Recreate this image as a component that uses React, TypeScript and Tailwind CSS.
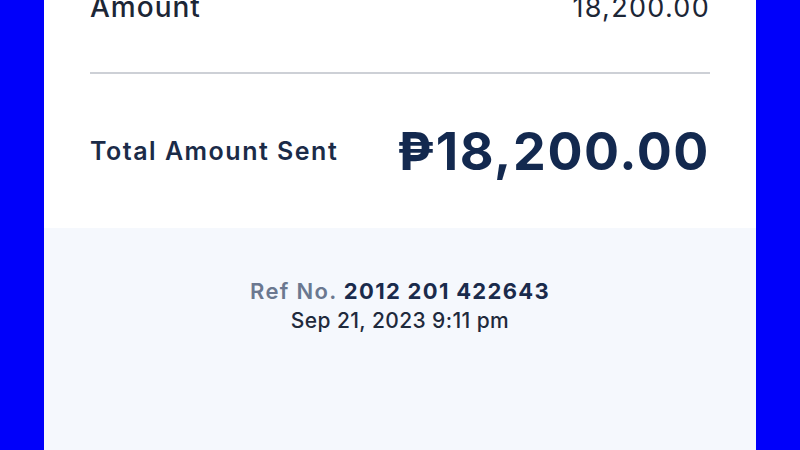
export default function App() {
  return (
    <div
      className="w-[800px] h-[450px] overflow-hidden flex bg-[#0000fa] px-[44px]"
      style={{ fontFamily: 'Inter, "DejaVu Sans", sans-serif' }}
    >
      <div className="flex-1 flex flex-col bg-white">
        {/* Summary */}
        <div className="px-[46px] h-[228px] flex flex-col">
          <div className="flex items-baseline justify-between -mt-[8px] h-[30px]">
            <span className="text-[28px] leading-[30px] font-medium tracking-[1px] text-[#1c2636]">Amount</span>
            <span className="text-[27px] leading-[30px] font-normal tracking-[1.3px] text-[#1c2636]">18,200.00</span>
          </div>
          <div className="mt-[50px] border-t-2 border-[#cdd0d6]" />
          <div className="flex items-center justify-between mt-[52px]">
            <span className="text-[25px] font-semibold tracking-[1.5px] text-[#1b2b48]">
              Total Amount Sent
            </span>
            <span className="text-[52px] leading-none font-bold tracking-[1.6px] text-[#13294f]">
              ₱18,200.00
            </span>
          </div>
        </div>

        {/* Reference */}
        <div className="flex-1 flex flex-col items-center bg-[#f5f8fd] pt-[48px]">
          <div className="text-[22px] leading-[30px] font-semibold tracking-[1.3px]">
            <span className="text-[#6b7890]">Ref No. </span>
            <span className="font-bold text-[#1a2b4c]">2012 201 422643</span>
          </div>
          <div className="text-[21px] leading-[30px] font-medium tracking-[0.4px] text-[#1f2a3c]">Sep 21, 2023 9:11 pm</div>
        </div>
      </div>
    </div>
  )
}
